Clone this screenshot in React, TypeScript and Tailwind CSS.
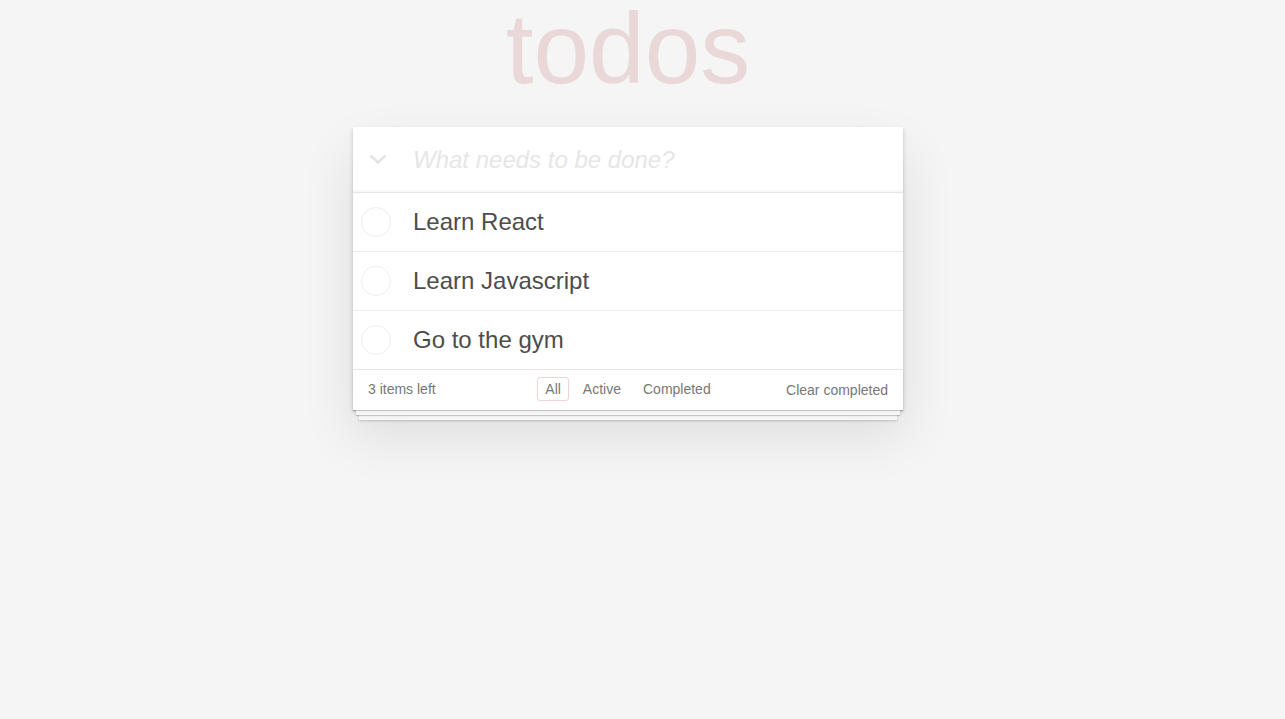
import React from "react";

const items = ["Learn React", "Learn Javascript", "Go to the gym"];

export default function App() {
  return (
    <div className="min-h-screen bg-[#f5f5f5] text-[#4d4d4d] text-[14px] font-['Liberation_Sans',Arial,sans-serif]">
      <div className="w-[550px] ml-[353px]">
        <h1 className="h-[98px] text-center text-[100px] leading-[96px] font-thin text-[rgba(175,47,47,0.15)]">
          todos
        </h1>
        <div className="mt-[29px] bg-white shadow-[0_2px_4px_0_rgba(0,0,0,0.2),0_25px_50px_0_rgba(0,0,0,0.1)]">
          <div className="h-[65px] flex items-center shadow-[inset_0_-2px_1px_rgba(0,0,0,0.03)]">
            <div className="w-[60px] flex items-center pl-[16px]">
              <svg width="18" height="11" viewBox="0 0 18 11" fill="none">
                <polyline points="1.5,1.5 9,8.5 16.5,1.5" stroke="#e3e3e3" strokeWidth="2.4" />
              </svg>
            </div>
            <span className="text-[24px] italic text-[#e6e6e6] leading-none">
              What needs to be done?
            </span>
          </div>
          <ul className="border-t border-[#e6e6e6]">
            {items.map((t, i) => (
              <li
                key={t}
                className={`flex items-center ${i < items.length - 1 ? "h-[59px] border-b border-[#ededed]" : "h-[58px]"}`}
              >
                <div className="w-[60px] flex items-center pl-[8px]">
                  <div className="w-[30px] h-[30px] rounded-full border border-[#ededed]" />
                </div>
                <span className="text-[24px] leading-none text-[#4d4d4d]">{t}</span>
              </li>
            ))}
          </ul>
          <footer className="relative h-[41px] border-t border-[#e6e6e6] px-[15px] pb-[2px] grid grid-cols-[1fr_auto_1fr] items-center text-[#777] before:content-[''] before:absolute before:left-0 before:right-0 before:bottom-0 before:h-[40px] before:shadow-[0_1px_1px_rgba(0,0,0,0.2),0_8px_0_-3px_#f6f6f6,0_9px_1px_-3px_rgba(0,0,0,0.2),0_16px_0_-6px_#f6f6f6,0_17px_2px_-6px_rgba(0,0,0,0.2)]">
            <span className="relative">3 items left</span>
            <ul className="relative flex items-center">
              <li className="mx-[3px] px-[7px] py-[3px] rounded-[3px] border border-[rgba(175,47,47,0.2)] leading-[16px]">All</li>
              <li className="mx-[3px] px-[7px] py-[3px] rounded-[3px] border border-transparent leading-[16px]">Active</li>
              <li className="mx-[3px] px-[7px] py-[3px] rounded-[3px] border border-transparent leading-[16px]">Completed</li>
            </ul>
            <span className="relative text-right pt-[2px]">Clear completed</span>
          </footer>
        </div>
      </div>
    </div>
  );
}
